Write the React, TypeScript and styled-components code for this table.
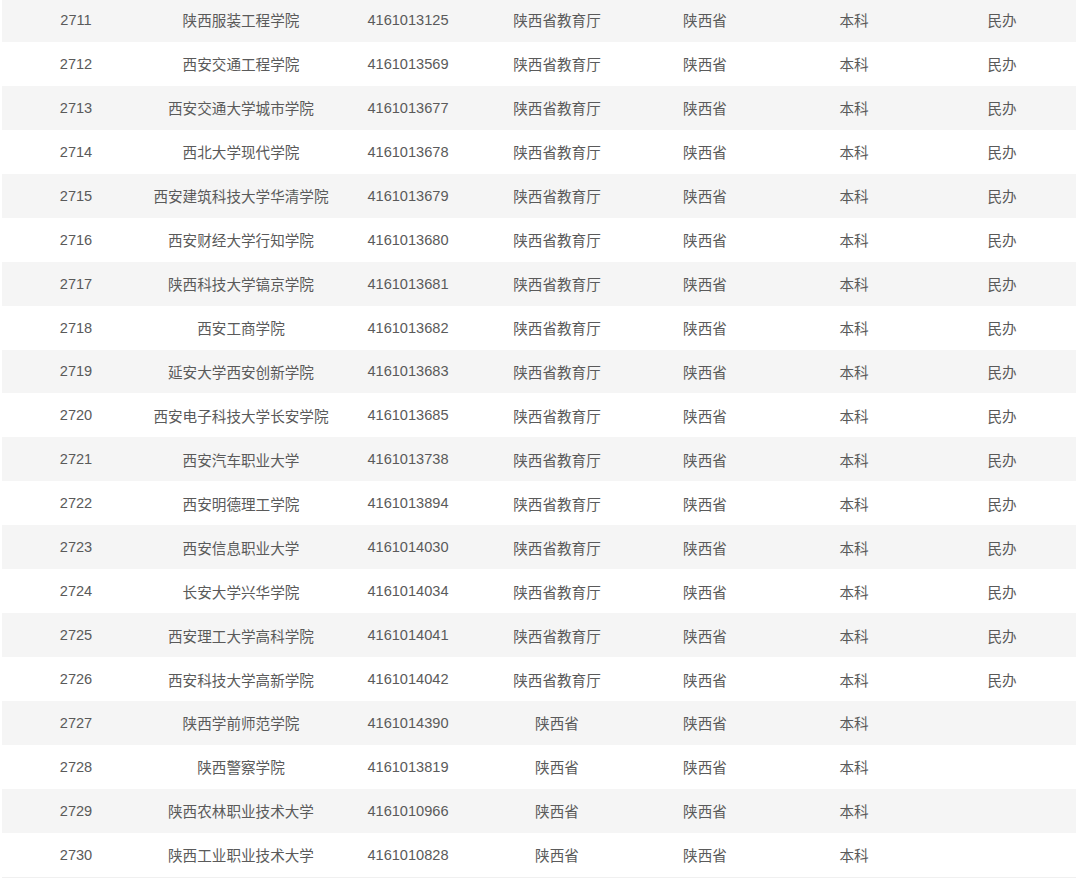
import * as React from 'react'
import styled, { createGlobalStyle } from 'styled-components'

interface ISchool {
    no: number
    name: string
    code: string
    dept: string
    place: string
    level: string
    kind: string
}

const GlobalStyle = createGlobalStyle`
    html, body {
        margin: 0;
        padding: 0;
        background: #ffffff;
    }
    body {
        font-family: "Liberation Sans", Arial, "Noto Sans CJK SC", sans-serif;
        overflow: hidden;
    }
`

const Wrapper = styled.div`
    padding: 0 4px 0 2px;
    margin-top: -2px;
`

const Table = styled.div`
    display: flex;
    flex-direction: column;
    border-bottom: 1px solid #f0f0f0;
`

const Row = styled.div<{ $striped: boolean }>`
    display: grid;
    grid-template-columns: 148px 182px 152px 146px 150px 148px 148px;
    height: 43.95px;
    align-items: center;
    background: ${(p) => (p.$striped ? '#f5f5f5' : '#ffffff')};
`

const Cell = styled.div`
    text-align: center;
    font-size: 14.6px;
    color: #5a5a5a;
    white-space: nowrap;
`

const rawData: [string, string, string][] = [
    ['陕西服装工程学院', '4161013125', '民办'],
    ['西安交通工程学院', '4161013569', '民办'],
    ['西安交通大学城市学院', '4161013677', '民办'],
    ['西北大学现代学院', '4161013678', '民办'],
    ['西安建筑科技大学华清学院', '4161013679', '民办'],
    ['西安财经大学行知学院', '4161013680', '民办'],
    ['陕西科技大学镐京学院', '4161013681', '民办'],
    ['西安工商学院', '4161013682', '民办'],
    ['延安大学西安创新学院', '4161013683', '民办'],
    ['西安电子科技大学长安学院', '4161013685', '民办'],
    ['西安汽车职业大学', '4161013738', '民办'],
    ['西安明德理工学院', '4161013894', '民办'],
    ['西安信息职业大学', '4161014030', '民办'],
    ['长安大学兴华学院', '4161014034', '民办'],
    ['西安理工大学高科学院', '4161014041', '民办'],
    ['西安科技大学高新学院', '4161014042', '民办'],
    ['陕西学前师范学院', '4161014390', ''],
    ['陕西警察学院', '4161013819', ''],
    ['陕西农林职业技术大学', '4161010966', ''],
    ['陕西工业职业技术大学', '4161010828', ''],
]

const schools: ISchool[] = rawData.map(([name, code, kind], i) => ({
    no: 2711 + i,
    name,
    code,
    dept: kind ? '陕西省教育厅' : '陕西省',
    place: '陕西省',
    level: '本科',
    kind,
}))

const App = () => {
    return (
        <>
            <GlobalStyle />
            <Wrapper>
                <Table>
                    {schools.map((s, i) => (
                        <Row key={s.no} $striped={i % 2 === 0}>
                            <Cell>{s.no}</Cell>
                            <Cell>{s.name}</Cell>
                            <Cell>{s.code}</Cell>
                            <Cell>{s.dept}</Cell>
                            <Cell>{s.place}</Cell>
                            <Cell>{s.level}</Cell>
                            <Cell>{s.kind}</Cell>
                        </Row>
                    ))}
                </Table>
            </Wrapper>
        </>
    )
}

export default App
